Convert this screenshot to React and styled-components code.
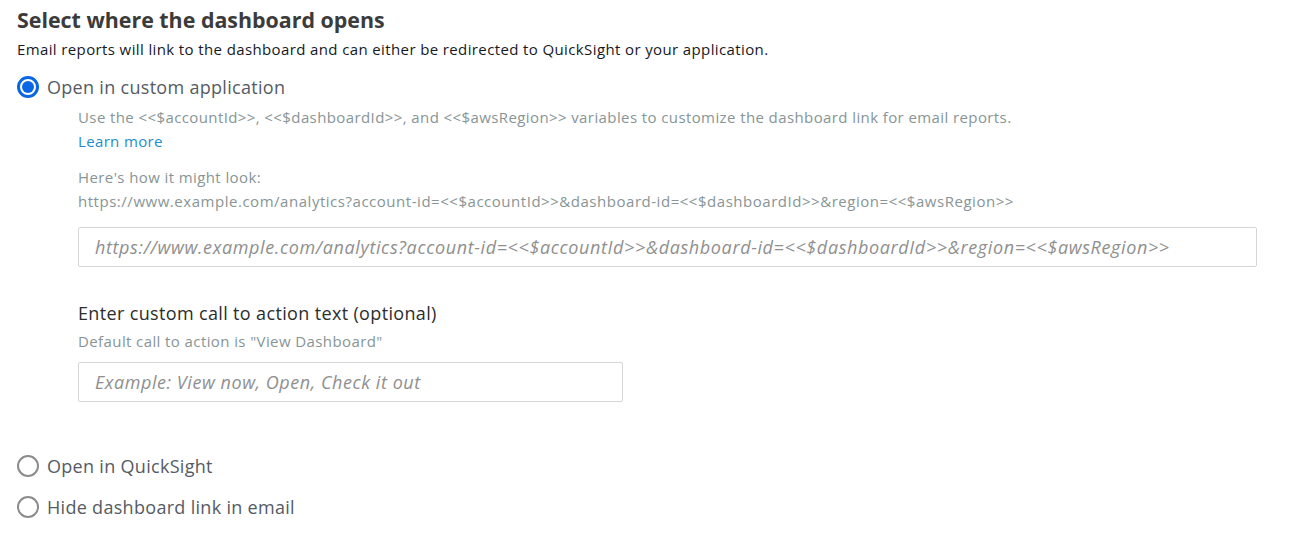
import React, { useState } from 'react'
import styled, { createGlobalStyle } from 'styled-components'

const GlobalStyle = createGlobalStyle`
  body {
    margin: 0;
    background: #ffffff;
    font-family: "Open Sans", "Noto Sans", sans-serif;
    color: #16191f;
  }
`

const Page = styled.div`
  padding: 5px 17px 0 17px;
`

const Title = styled.h2`
  margin: 0;
  font-size: 21.4px;
  line-height: 30px;
  font-weight: 700;
  color: #3b3b3b;
`

const Subtitle = styled.p`
  margin: 4px 0 0 0;
  font-size: 15px;
  letter-spacing: 0.38px;
  line-height: 20px;
  color: #16191f;
`

const Option = styled.label`
  display: flex;
  align-items: center;
  gap: 8px;
  margin-top: ${p => p.$top}px;
  font-size: 18px;
  letter-spacing: 0.3px;
  line-height: 24px;
  color: #545b64;
  cursor: pointer;
`

const Dot = styled.span`
  box-sizing: border-box;
  width: 22px;
  height: 22px;
  border-radius: 50%;
  border: ${p => (p.$checked ? '3px solid #0a66e4' : '2px solid #8c8c8c')};
  padding: 2px;
  background: #fff;
  display: flex;
  flex-shrink: 0;
  &::after {
    content: '';
    flex: 1;
    border-radius: 50%;
    background: ${p => (p.$checked ? '#0a66e4' : 'transparent')};
  }
`

const Details = styled.div`
  padding-left: 61px;
  padding-right: 27px;
  margin-top: 6px;
`

const Hint = styled.p`
  margin: ${p => p.$top || 0}px 0 0 0;
  font-size: 15px;
  letter-spacing: ${p => p.$spacing || 0.4}px;
  line-height: 24px;
  color: #879596;
  white-space: nowrap;
`

const LearnMore = styled.a`
  display: inline-block;
  font-size: 15px;
  letter-spacing: 0.35px;
  line-height: 24px;
  color: #1c8ecb;
  text-decoration: none;
`

const TextInput = styled.input`
  box-sizing: border-box;
  display: block;
  width: ${p => p.$width};
  height: 40px;
  margin-top: ${p => p.$top}px;
  padding: 0 16px;
  border: 1px solid #d5d5d5;
  border-radius: 2px;
  font-family: inherit;
  font-size: 18px;
  letter-spacing: ${p => p.$spacing || 0.55}px;
  color: #16191f;
  outline: none;
  &::placeholder {
    font-style: italic;
    color: #8f8f8f;
  }
`

const FieldLabel = styled.div`
  margin-top: 34px;
  font-size: 18px;
  letter-spacing: 0.35px;
  line-height: 24px;
  color: #2d2d2d;
`

const options = [
  { id: 'custom', label: 'Open in custom application' },
  { id: 'quicksight', label: 'Open in QuickSight' },
  { id: 'hide', label: 'Hide dashboard link in email' },
]

export default function App() {
  const [choice, setChoice] = useState('custom')
  const url =
    'https://www.example.com/analytics?account-id=<<$accountId>>&dashboard-id=<<$dashboardId>>&region=<<$awsRegion>>'

  return (
    <Page>
      <GlobalStyle />
      <Title>Select where the dashboard opens</Title>
      <Subtitle>
        Email reports will link to the dashboard and can either be redirected to QuickSight or your application.
      </Subtitle>

      <Option $top={16} onClick={() => setChoice('custom')}>
        <Dot $checked={choice === 'custom'} />
        {options[0].label}
      </Option>

      <Details>
        <Hint>
          Use the &lt;&lt;$accountId&gt;&gt;, &lt;&lt;$dashboardId&gt;&gt;, and &lt;&lt;$awsRegion&gt;&gt; variables to customize the dashboard link for email reports.
        </Hint>
        <LearnMore href="#">Learn more</LearnMore>
        <Hint $top={12}>Here's how it might look:</Hint>
        <Hint $spacing={0.53}>{url}</Hint>
        <TextInput $top={14} $width="100%" $spacing={0.62} placeholder={url} />
        <FieldLabel>Enter custom call to action text (optional)</FieldLabel>
        <Hint $top={4}>Default call to action is "View Dashboard"</Hint>
        <TextInput $top={9} $width="545px" placeholder="Example: View now, Open, Check it out" />
      </Details>

      <Option $top={52} onClick={() => setChoice('quicksight')}>
        <Dot $checked={choice === 'quicksight'} />
        {options[1].label}
      </Option>
      <Option $top={17} onClick={() => setChoice('hide')}>
        <Dot $checked={choice === 'hide'} />
        {options[2].label}
      </Option>
    </Page>
  )
}
